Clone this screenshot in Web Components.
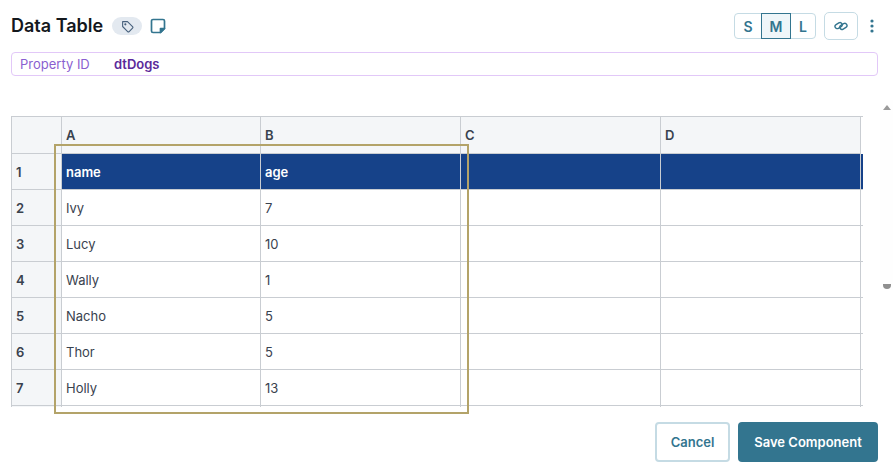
<!DOCTYPE html>
<html>
<head>
<meta charset="utf-8">
<title>Data Table</title>
<style>
    html, body { margin: 0; padding: 0; background: #fff; }
    body { font-family: Inter, "Liberation Sans", sans-serif; overflow: hidden; }
</style>
</head>
<body>
<x-editor>
    <x-title-bar slot="top">Data Table</x-title-bar>
    <x-property label="Property ID" value="dtDogs" slot="top"></x-property>
    <x-sheet slot="main"></x-sheet>
    <x-button slot="actions" kind="outline">Cancel</x-button>
    <x-button slot="actions" kind="solid">Save Component</x-button>
</x-editor>

<script>
class XEditor extends HTMLElement {
    connectedCallback() {
        this.attachShadow({ mode: 'open' });
        this.shadowRoot.innerHTML = `
            <style>
                :host {
                    display: block;
                    width: 893px;
                    height: 469px;
                    box-sizing: border-box;
                    padding: 12px 15px 0 11px;
                    overflow: hidden;
                }
                .main { margin-top: 24px; }
                .actions {
                    display: flex;
                    justify-content: flex-end;
                    gap: 8px;
                    margin-top: 15px;
                }
            </style>
            <slot name="top"></slot>
            <div class="main"><slot name="main"></slot></div>
            <div class="actions"><slot name="actions"></slot></div>
        `;
    }
}

class XTitleBar extends HTMLElement {
    connectedCallback() {
        this.attachShadow({ mode: 'open' });
        this.shadowRoot.innerHTML = `
            <style>
                :host {
                    display: flex;
                    align-items: center;
                    height: 28px;
                    color: #14181d;
                }
                .title {
                    font-size: 18px;
                    font-weight: 600;
                    line-height: 26px;
                }
                .pill {
                    display: flex;
                    align-items: center;
                    justify-content: center;
                    width: 30px;
                    height: 18px;
                    margin-left: 9px;
                    border-radius: 9px;
                    background: #e3e9f0;
                }
                .note { display: block; margin-left: 8px; }
                .spacer { flex: 1; }
                .sizes {
                    display: flex;
                    height: 26px;
                    box-sizing: border-box;
                    border: 1px solid #c5dbe4;
                    border-radius: 4px;
                }
                .sizes span {
                    display: flex;
                    align-items: center;
                    justify-content: center;
                    width: 26px;
                    font-size: 14px;
                    font-weight: 600;
                    color: #33758f;
                }
                .sizes .on {
                    width: 30px;
                    margin: -1px 0;
                    background: #eff6f9;
                    border: 1px solid #33758f;
                    box-sizing: border-box;
                }
                .sizes span:last-child { width: 24px; }
                .link {
                    display: flex;
                    align-items: center;
                    justify-content: center;
                    width: 34px;
                    height: 28px;
                    margin-left: 8px;
                    box-sizing: border-box;
                    border: 1px solid #c5dbe4;
                    border-radius: 5px;
                }
                .more {
                    display: flex;
                    justify-content: center;
                    width: 12px;
                    margin-left: 8px;
                }
            </style>
            <div class="title"><slot></slot></div>
            <div class="pill">
                <svg width="13" height="13" viewBox="0 0 24 24" fill="none" stroke="#47607c" stroke-width="2" stroke-linecap="round" stroke-linejoin="round">
                    <path d="M3 3h9l9.3 9.3a2 2 0 0 1 0 2.8l-6.2 6.2a2 2 0 0 1-2.8 0L3 12V3z"></path>
                    <circle cx="8" cy="8" r="1"></circle>
                </svg>
            </div>
            <svg class="note" width="16" height="16" viewBox="0 0 16 16" fill="none" stroke="#33758f" stroke-width="1.7" stroke-linejoin="round">
                <path d="M3 1.5h10a1.5 1.5 0 0 1 1.5 1.500v7.500l-4 4H3A1.500 1.500 0 0 1 1.500 13V3A1.500 1.500 0 0 1 3 1.500z"></path>
                <path d="M14.500 10.500h-4v4z" fill="#33758f"></path>
            </svg>
            <div class="spacer"></div>
            <div class="sizes"><span>S</span><span class="on">M</span><span>L</span></div>
            <div class="link">
                <svg width="14" height="12" viewBox="0 0 14 12" fill="none" stroke="#33758f" stroke-width="1.400">
                    <rect x="0.800" y="3.400" width="7.600" height="4.400" rx="2.200" transform="rotate(-32 4.600 5.600)"></rect>
                    <rect x="5.600" y="4.200" width="7.600" height="4.400" rx="2.200" transform="rotate(-32 9.400 6.400)"></rect>
                </svg>
            </div>
            <div class="more">
                <svg width="4" height="14" viewBox="0 0 4 14" fill="#33758f">
                    <circle cx="2" cy="2" r="1.600"></circle>
                    <circle cx="2" cy="7" r="1.600"></circle>
                    <circle cx="2" cy="12" r="1.600"></circle>
                </svg>
            </div>
        `;
    }
}

class XProperty extends HTMLElement {
    connectedCallback() {
        this.attachShadow({ mode: 'open' });
        this.shadowRoot.innerHTML = `
            <style>
                :host {
                    display: flex;
                    align-items: center;
                    height: 24px;
                    box-sizing: border-box;
                    margin-top: 12px;
                    padding-left: 8px;
                    border: 1px solid #e2c8f8;
                    border-radius: 4px;
                    font-size: 13px;
                }
                .label { width: 94px; color: #8a5fd0; }
                .value { color: #5b2a9a; font-weight: 600; }
            </style>
            <span class="label">${this.getAttribute('label')}</span>
            <span class="value">${this.getAttribute('value')}</span>
        `;
    }
}

const SHEET_ROWS = [
    ['name', 'age'],
    ['Ivy', '7'],
    ['Lucy', '10'],
    ['Wally', '1'],
    ['Nacho', '5'],
    ['Thor', '5'],
    ['Holly', '13']
];

class XSheet extends HTMLElement {
    connectedCallback() {
        this.attachShadow({ mode: 'open' });

        let cells = '<div class="cell head"></div>';
        for (const col of ['A', 'B', 'C', 'D']) {
            cells += `<div class="cell head col">${col}</div>`;
        }
        cells += '<div class="tail head-tail"></div>';

        SHEET_ROWS.forEach((row, i) => {
            const navy = i === 0 ? ' navy' : '';
            cells += `<div class="cell head num">${i + 1}</div>`;
            for (let c = 0; c < 4; c++) {
                cells += `<div class="cell${navy}">${row[c] || ''}</div>`;
            }
            cells += `<div class="tail${navy}"></div>`;
        });

        // the next row is scrolled out of view, only its top shows
        cells += '<div class="cell head"></div>';
        for (let c = 0; c < 4; c++) cells += '<div class="cell"></div>';

        this.shadowRoot.innerHTML = `
            <style>
                :host {
                    display: flex;
                    position: relative;
                    height: 307px;
                    margin-right: -15px;
                }
                .clip {
                    width: 852px;
                    height: 291px;
                    margin-top: 16px;
                    overflow: hidden;
                    flex: none;
                }
                .grid {
                    display: grid;
                    grid-template-columns: 51px 199px 200px 200px 200px 2px;
                    grid-auto-rows: 36px;
                    grid-template-rows: 37px;
                    border-top: 1px solid #c9cdd2;
                    font-size: 13px;
                    color: #39424e;
                }
                .cell {
                    display: flex;
                    align-items: center;
                    padding-left: 4px;
                    box-sizing: border-box;
                    border-right: 1px solid #c9cdd2;
                    border-bottom: 1px solid #c9cdd2;
                    background: #fff;
                }
                .tail { border-bottom: 1px solid #c9cdd2; }
                .head-tail { border-bottom: none; }
                .head { background: #f4f6f8; font-weight: 600; }
                .cell.head:nth-child(6n+1) { border-left: 1px solid #c9cdd2; }
                .navy { background: #164289; color: #fff; font-weight: 600; }
                .bar {
                    flex: none;
                    width: 13px;
                    height: 190px;
                    margin-left: 17px;
                    display: flex;
                    flex-direction: column;
                    justify-content: space-between;
                    align-items: center;
                    background: #fefefe;
                    box-sizing: border-box;
                    padding: 5px 0 1px;
                }
                .up, .down {
                    width: 0;
                    height: 0;
                    border-left: 4px solid transparent;
                    border-right: 4px solid transparent;
                }
                .up { border-bottom: 5px solid #9a9a9a; }
                .down {
                    width: 8px;
                    height: 5px;
                    border: none;
                    background: #8f8f8f;
                    border-radius: 0 0 4px 4px;
                }
                .frame {
                    position: absolute;
                    left: 43px;
                    top: 44px;
                    width: 415px;
                    height: 270px;
                    box-sizing: border-box;
                    border: 2.5px solid #b3a369;
                    pointer-events: none;
                }
            </style>
            <div class="clip"><div class="grid">${cells}</div></div>
            <div class="bar"><div class="up"></div><div class="down"></div></div>
            <div class="frame"></div>
        `;
    }
}

class XButton extends HTMLElement {
    connectedCallback() {
        this.attachShadow({ mode: 'open' });
        const solid = this.getAttribute('kind') === 'solid';
        this.shadowRoot.innerHTML = `
            <style>
                :host {
                    display: flex;
                    align-items: center;
                    justify-content: center;
                    height: 40px;
                    box-sizing: border-box;
                    width: ${solid ? 140 : 75}px;
                    border-radius: 4px;
                    font-size: 13px;
                    font-weight: 600;
                    background: ${solid ? '#33758f' : '#fff'};
                    color: ${solid ? '#fff' : '#33758f'};
                    border: ${solid ? 'none' : '2px solid #c5dbe4'};
                }
            </style>
            <slot></slot>
        `;
    }
}

customElements.define('x-editor', XEditor);
customElements.define('x-title-bar', XTitleBar);
customElements.define('x-property', XProperty);
customElements.define('x-sheet', XSheet);
customElements.define('x-button', XButton);
</script>
</body>
</html>
